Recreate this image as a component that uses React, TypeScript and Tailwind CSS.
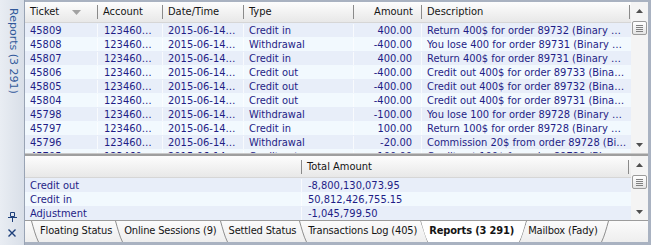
import React from "react";

type Tx = { ticket: string; type: string; amount: string; desc: string };

const transactions: Tx[] = [
  { ticket: "45809", type: "Credit in", amount: "400.00", desc: "Return 400$ for order 89732 (Binary …" },
  { ticket: "45808", type: "Withdrawal", amount: "-400.00", desc: "You lose 400 for order 89731 (Binary …" },
  { ticket: "45807", type: "Credit in", amount: "400.00", desc: "Return 400$ for order 89731 (Binary …" },
  { ticket: "45806", type: "Credit out", amount: "-400.00", desc: "Credit out 400$ for order 89733 (Bina…" },
  { ticket: "45805", type: "Credit out", amount: "-400.00", desc: "Credit out 400$ for order 89732 (Bina…" },
  { ticket: "45804", type: "Credit out", amount: "-400.00", desc: "Credit out 400$ for order 89731 (Bina…" },
  { ticket: "45798", type: "Withdrawal", amount: "-100.00", desc: "You lose 100 for order 89728 (Binary …" },
  { ticket: "45797", type: "Credit in", amount: "100.00", desc: "Return 100$ for order 89728 (Binary …" },
  { ticket: "45796", type: "Withdrawal", amount: "-20.00", desc: "Commission 20$ from order 89728 (Bi…" },
  { ticket: "45795", type: "Credit out", amount: "-100.00", desc: "Credit out 100$ for order 89728 (Bi…" },
];

const totals = [
  { label: "Credit out", value: "-8,800,130,073.95" },
  { label: "Credit in", value: "50,812,426,755.15" },
  { label: "Adjustment", value: "-1,045,799.50" },
];

const tabsBefore = ["Floating Status", "Online Sessions (9)", "Settled Status", "Transactions Log (405)"];

function ScrollBar() {
  return (
    <div className="flex w-[17px] shrink-0 flex-col bg-[#f4f4f4]">
      <div className="flex h-[17px] shrink-0 items-center justify-center">
        <svg width="7" height="4" viewBox="0 0 7 4">
          <path d="M3.5 0L7 4H0z" fill="#4f4f4f" />
        </svg>
      </div>
      <div className="mx-[1px] mt-[2px] flex h-[14px] shrink-0 flex-col items-center justify-center gap-[1px] rounded-[2px] border border-[#9b9b9b] bg-gradient-to-b from-white to-[#e4e4e4]">
        <span className="h-px w-[7px] bg-[#808080]" />
        <span className="h-px w-[7px] bg-[#808080]" />
        <span className="h-px w-[7px] bg-[#808080]" />
        <span className="h-px w-[7px] bg-[#808080]" />
      </div>
      <div className="flex-1" />
      <div className="flex h-[17px] shrink-0 items-center justify-center">
        <svg width="7" height="4" viewBox="0 0 7 4">
          <path d="M0 0h7L3.5 4z" fill="#4f4f4f" />
        </svg>
      </div>
    </div>
  );
}

function Slant({ dir }: { dir: "back" | "fwd" }) {
  return (
    <svg width="8" height="21" viewBox="0 0 8 21" className="shrink-0">
      <path
        d={dir === "back" ? "M0.5 0C2.5 7 4.5 15 7.5 21" : "M7.5 0C5.5 7 3.5 15 0.5 21"}
        stroke="#8e8e8e"
        strokeWidth="1"
        fill="none"
      />
    </svg>
  );
}

function HeaderCell({ w, children, right }: { w: string; children?: React.ReactNode; right?: boolean }) {
  return (
    <div
      className={`flex h-[14px] shrink-0 items-center border-r border-[#8a8a8a] ${w} ${
        right ? "justify-end pr-[8px]" : "pl-[5px]"
      }`}
    >
      {children}
    </div>
  );
}

export default function App() {
  return (
    <div className="flex h-[245px] w-[651px] overflow-hidden bg-[#a9b2c1] font-['DejaVu_Sans_Condensed','Liberation_Sans',sans-serif] text-[11px] text-[#141414]">
      {/* Auto-hide side panel */}
      <div className="flex w-[25px] shrink-0 flex-col items-center border-r border-[#98a3b4] bg-gradient-to-r from-[#e9edf3] to-[#d9dfe8] pb-[8px] pt-[8px]">
        <span className="pl-[1px] font-['DejaVu_Sans','Liberation_Sans',sans-serif] text-[#31599a] [writing-mode:vertical-rl]">
          Reports (3 291)
        </span>
        <div className="flex-1" />
        <svg width="9" height="10" viewBox="0 0 9 10" className="mb-[7px]">
          <path d="M2.5 0.5h4v4h-4z" fill="none" stroke="#1d3f7a" />
          <path d="M0 5.5h9M4.5 5.5V10" stroke="#1d3f7a" />
        </svg>
        <svg width="8" height="8" viewBox="0 0 8 8">
          <path d="M0.5 0.5l7 7M7.5 0.5l-7 7" stroke="#1d3f7a" strokeWidth="1.4" />
        </svg>
      </div>

      {/* Main */}
      <div className="mb-[3px] mr-[3px] mt-[2px] flex flex-1 flex-col overflow-hidden bg-white">
        {/* Transactions grid */}
        <div className="flex h-[151px] shrink-0">
          <div className="flex w-[606px] flex-col overflow-hidden">
            <div className="flex h-[21px] shrink-0 items-center border-b border-[#d6d6d6] bg-gradient-to-b from-[#fdfdfd] to-[#e8e8e8]">
              <HeaderCell w="w-[73px]">
                <span className="flex-1">Ticket</span>
                <svg width="9" height="5" viewBox="0 0 9 5" className="mr-[16px]">
                  <path d="M0 0h9L4.5 5z" fill="#a2a2a2" />
                </svg>
              </HeaderCell>
              <HeaderCell w="w-[65px]">Account</HeaderCell>
              <HeaderCell w="w-[81px]">Date/Time</HeaderCell>
              <HeaderCell w="w-[110px]">Type</HeaderCell>
              <HeaderCell w="w-[68px]" right>
                Amount
              </HeaderCell>
              <HeaderCell w="w-[208px]">Description</HeaderCell>
            </div>
            <div className="flex-1 overflow-hidden">
              {transactions.map((t, i) => (
                <div
                  key={t.ticket}
                  className={`grid h-[14px] grid-cols-[73px_65px_81px_110px_68px_209px] pt-px leading-[13px] text-[#1f1d86] ${
                    i % 2 ? "bg-[#f2f9fe]" : "bg-[#e8eef9]"
                  }`}
                >
                  <div className="truncate border-r border-white/70 pl-[5px]">{t.ticket}</div>
                  <div className="truncate border-r border-white/70 pl-[6px]">123460…</div>
                  <div className="truncate border-r border-white/70 pl-[5px]">2015-06-14…</div>
                  <div className="truncate border-r border-white/70 pl-[5px]">{t.type}</div>
                  <div className="truncate border-r border-white/70 pr-[9px] text-right">{t.amount}</div>
                  <div className="truncate pl-[5px]">{t.desc}</div>
                </div>
              ))}
            </div>
          </div>
          <ScrollBar />
        </div>

        {/* Splitter */}
        <div className="h-[3px] shrink-0 border-t border-[#c9c9c9] bg-[#9f9f9f]" />

        {/* Totals grid */}
        <div className="flex h-[64px] shrink-0">
          <div className="flex w-[606px] flex-col overflow-hidden">
            <div className="flex h-[22px] shrink-0 items-center border-b border-[#d6d6d6] bg-gradient-to-b from-[#fdfdfd] to-[#e8e8e8] pt-px">
              <HeaderCell w="w-[277px]" />
              <HeaderCell w="w-[327px]">Total Amount</HeaderCell>
            </div>
            {totals.map((r, i) => (
              <div
                key={r.label}
                className={`grid h-[14px] grid-cols-[277px_329px] pt-px leading-[13px] text-[#1f1d86] ${
                  i % 2 ? "bg-[#f2f9fe]" : "bg-[#e8eef9]"
                }`}
              >
                <div className="truncate border-r border-white/70 pl-[5px]">{r.label}</div>
                <div className="truncate pl-[6px]">{r.value}</div>
              </div>
            ))}
          </div>
          <ScrollBar />
        </div>

        {/* Document tabs */}
        <div className="flex h-[22px] shrink-0 items-end border-t border-[#9c9c9c] bg-gradient-to-b from-[#fbfbfb] to-[#eeeeee] pl-[6px] tracking-[-0.15px]">
          {tabsBefore.map((name) => (
            <div key={name} className="flex h-[21px] items-center">
              <Slant dir="back" />
              <span className="whitespace-nowrap pl-px pr-[3px]">{name}</span>
            </div>
          ))}
          <div className="flex h-[21px] items-center bg-white [clip-path:polygon(0_0,100%_0,calc(100%-7px)_100%,7px_100%)]">
            <Slant dir="back" />
            <span className="whitespace-nowrap pl-px pr-[5px] font-bold">Reports (3 291)</span>
            <Slant dir="fwd" />
          </div>
          <div className="flex h-[21px] items-center">
            <span className="whitespace-nowrap pl-px pr-[3px]">Mailbox (Fady)</span>
            <Slant dir="fwd" />
          </div>
        </div>
      </div>
    </div>
  );
}
